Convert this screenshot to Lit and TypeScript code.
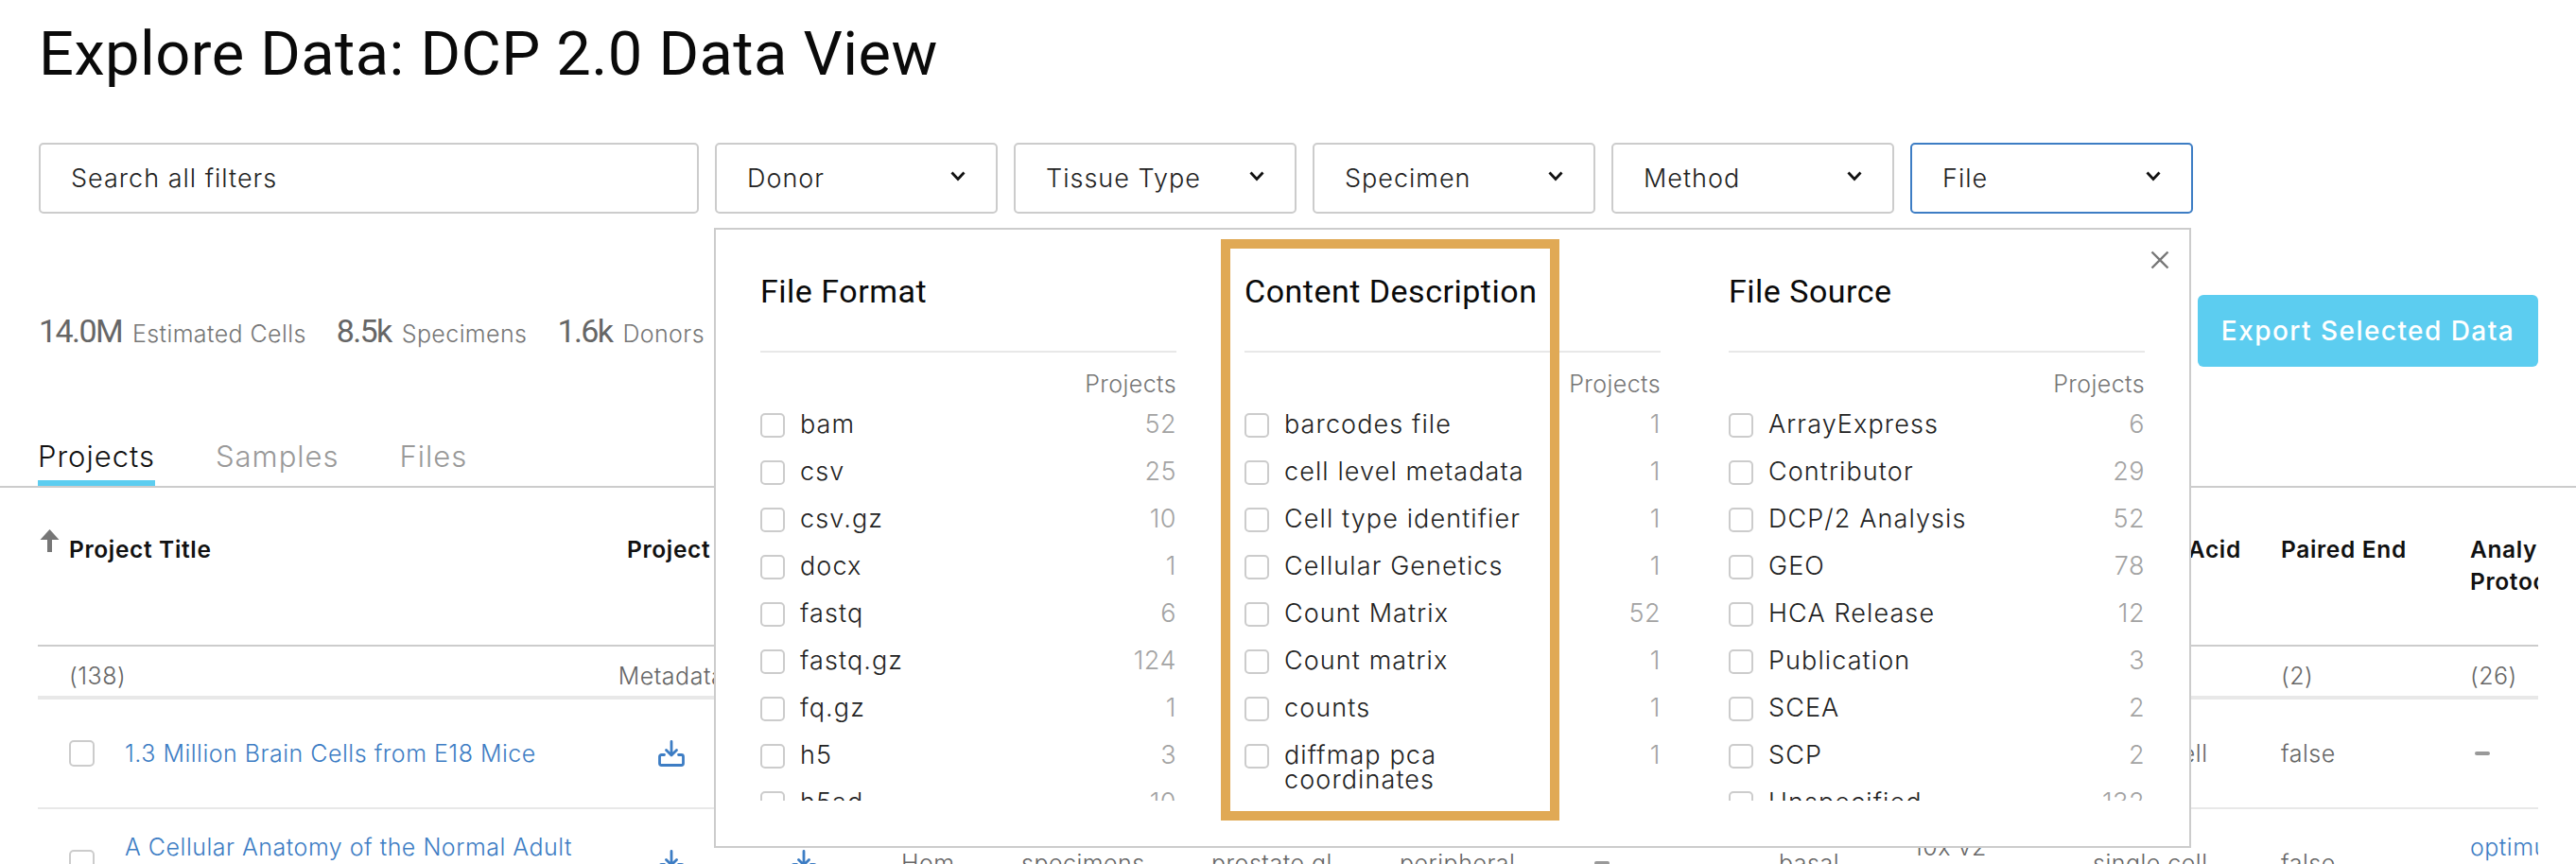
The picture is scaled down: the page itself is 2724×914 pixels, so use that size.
import { LitElement, html, css, svg } from 'lit';
import { customElement } from 'lit/decorators.js';

const SELECTS = ['Donor', 'Tissue Type', 'Specimen', 'Method', 'File'];

const STATS = [
  ['14.0M', 'Estimated Cells'],
  ['8.5k', 'Specimens'],
  ['1.6k', 'Donors'],
];

const FACETS: { title: string; terms: [string, number][] }[] = [
  {
    title: 'File Format',
    terms: [['bam', 52], ['csv', 25], ['csv.gz', 10], ['docx', 1], ['fastq', 6], ['fastq.gz', 124], ['fq.gz', 1], ['h5', 3], ['h5ad', 10]],
  },
  {
    title: 'Content Description',
    terms: [['barcodes file', 1], ['cell level metadata', 1], ['Cell type identifier', 1], ['Cellular Genetics', 1], ['Count Matrix', 52], ['Count matrix', 1], ['counts', 1], ['diffmap pca coordinates', 1]],
  },
  {
    title: 'File Source',
    terms: [['ArrayExpress', 6], ['Contributor', 29], ['DCP/2 Analysis', 52], ['GEO', 78], ['HCA Release', 12], ['Publication', 3], ['SCEA', 2], ['SCP', 2], ['Unspecified', 132]],
  },
];

const HEADERS = ['Project Title', 'Project Metadata', 'Project Matrices', 'Species', 'Sample Type', 'Anatomical Entity', 'Organ Part', 'Model Organ', 'Selected Cell Type', 'Library Construction Method', 'Nucleic Acid', 'Paired End', 'Analysis Protocol'];

const COUNTS = ['(138)', 'Metadata', '', '', '', '', '', '', '', '', '', '(2)', '(26)'];

const ROWS = [
  ['1.3 Million Brain Cells from E18 Mice', 'Mus', 'specimens', 'brain', 'cortex', '–', 'neuron', '10x v2', 'single cell', 'false', '–'],
  ['A Cellular Anatomy of the Normal Adult Prostate and Prostatic Urethra', 'Hom', 'specimens', 'prostate gl', 'peripheral', '–', 'basal', '10x v2 sequencing', 'single cell', 'false', 'optimus v4.2.2'],
];

const chevron = svg`<svg class="chevron" width="16" height="11" viewBox="0 0 16 11"><path d="M1.5 1.5 8 8.5l6.5-7" fill="none" stroke="#111" stroke-width="2.8"/></svg>`;

const downloadIcon = svg`<svg width="28" height="28" viewBox="0 0 28 28" fill="none" stroke="#3d7dc4" stroke-width="2.8" stroke-linecap="round" stroke-linejoin="round"><path d="M14 1.5v14M8.5 10.5l5.5 5.5 5.5-5.5"/><path d="M6.5 15.5H3.5a2 2 0 0 0-2 2v7a2 2 0 0 0 2 2h21a2 2 0 0 0 2-2v-7a2 2 0 0 0-2-2h-3"/></svg>`;

@customElement('app-root')
export class AppRoot extends LitElement {
  static styles = css`
    :host {
      display: block;
      position: relative;
      height: 914px;
      overflow: hidden;
      background: #fff;
      color: #111;
      font-family: 'Inter', 'Open Sans', sans-serif;
      font-weight: 300;
    }

    h1, h2 {
      margin: 0;
      font-family: 'Roboto', sans-serif;
      font-weight: 400;
    }

    h1 {
      height: 151px;
      padding: 25px 0 0 41px;
      box-sizing: border-box;
      font-size: 65px;
      line-height: 64px;
      letter-spacing: 0.45px;
      color: #0a0a0a;
    }

    .filters {
      position: relative;
      display: grid;
      grid-template-columns: 698px repeat(5, 299px);
      gap: 17px;
      height: 75px;
      padding-left: 41px;
    }

    .control {
      display: flex;
      align-items: center;
      justify-content: space-between;
      box-sizing: border-box;
      padding: 0 32px;
      border: 2px solid #ccc;
      border-radius: 5px;
      font-size: 27px;
      letter-spacing: 1px;
      color: #222;
    }

    .control.open {
      border-color: #3d7dc4;
    }

    .chevron {
      margin-top: -4px;
    }

    .summary {
      display: flex;
      align-items: center;
      justify-content: space-between;
      height: 214px;
      padding: 34px 40px 0 41px;
      box-sizing: border-box;
    }

    .stats {
      display: flex;
      gap: 32px;
      color: #767676;
      font-size: 25px;
      letter-spacing: 0.4px;
    }

    .stats b {
      margin-right: 11px;
      font-family: 'Roboto', sans-serif;
      font-weight: 400;
      font-size: 34px;
      letter-spacing: -1.6px;
      color: #666;
    }

    .export {
      width: 360px;
      height: 76px;
      border: 0;
      border-radius: 6px;
      background: #5ccdf0;
      color: #fff;
      font: 500 28px 'Inter', sans-serif;
      letter-spacing: 1.45px;
    }

    .tabs {
      display: flex;
      gap: 64px;
      height: 76px;
      padding-left: 40px;
      box-sizing: border-box;
      border-bottom: 2px solid #ccc;
      font-size: 31px;
      letter-spacing: 1px;
      color: #999;
    }

    .tab {
      height: 74px;
      padding-top: 25px;
      box-sizing: border-box;
      line-height: 36px;
      white-space: nowrap;
    }

    .tab.active {
      color: #111;
      border-bottom: 6px solid #5ccdf0;
    }

    .table {
      margin-left: 40px;
      width: 2644px;
      overflow: hidden;
      font-size: 25px;
      letter-spacing: 0.5px;
      color: #666;
      line-height: 34px;
    }

    .grid {
      display: grid;
      grid-template-columns: 600px 140px 173px 127px 201px 199px 201px 200px 142px 190px 199px 200px 140px;
      width: 2712px;
    }

    .grid > div {
      padding-right: 16px;
      box-sizing: border-box;
    }

    .grid > .mid {
      text-align: center;
      padding-right: 0;
    }

    .grid > .mid.third {
      padding-right: 33px;
    }

    .head {
      height: 168px;
      padding-top: 48px;
      box-sizing: border-box;
      border-bottom: 2px solid #ccc;
      font-size: 24.5px;
      letter-spacing: 0.65px;
      font-weight: 600;
      color: #111;
    }

    .grid > .first {
      padding-left: 33px;
    }

    .title-head {
      position: relative;
    }

    .sort {
      position: absolute;
      left: 2px;
      top: -4px;
    }

    .head .lead {
      padding-left: 23px;
      white-space: nowrap;
    }

    .counts {
      height: 56px;
      padding-top: 14px;
      box-sizing: border-box;
      border-bottom: 4px solid #e8e8e8;
    }

    .row {
      height: 114px;
      align-items: center;
      border-bottom: 2px solid #e8e8e8;
    }

    .row .first {
      display: flex;
      align-items: center;
      gap: 32px;
    }

    .box {
      flex: none;
      width: 26px;
      height: 26px;
      box-sizing: border-box;
      border: 2px solid #ccc;
      border-radius: 5px;
      background: #fff;
    }

    .row .box {
      width: 27px;
      height: 28px;
    }

    a {
      color: #3d7dc4;
    }

    .row .mid svg {
      display: block;
      margin: 0 auto;
    }

    .dash {
      display: block;
      width: 16px;
      height: 4px;
      margin-left: 5px;
      border-radius: 2px;
      background: #999;
    }

    /* file filter panel, sits over the summary and the table */
    .popup {
      position: absolute;
      left: 755px;
      top: 241px;
      width: 1562px;
      height: 656px;
      box-sizing: border-box;
      padding-left: 47px;
      display: grid;
      grid-template-columns: repeat(3, 440px);
      gap: 72px;
      border: 2px solid #ccc;
      background: #fff;
    }

    .facet h2 {
      padding: 45px 0 43px;
      border-bottom: 2px solid #e8e8e8;
      font-size: 34px;
      line-height: 40px;
      letter-spacing: 0.5px;
      color: #0a0a0a;
      white-space: nowrap;
    }

    .projects {
      margin: 18px 0 3px;
      text-align: right;
      font-size: 25px;
      letter-spacing: 0.4px;
      line-height: 30px;
      color: #767676;
    }

    .terms {
      height: 423px;
      overflow: hidden;
    }

    .term {
      display: flex;
      align-items: flex-start;
      box-sizing: border-box;
      min-height: 50px;
      padding-top: 13px;
      font-size: 27px;
      letter-spacing: 1.1px;
      line-height: 26px;
      color: #222;
    }

    .term .label {
      flex: 1;
      margin: -1px 0 0 16px;
      max-width: 290px;
    }

    .term .num {
      margin: -1px 0 0 auto;
      letter-spacing: 0.5px;
      color: #a3a3a3;
    }

    .close {
      position: absolute;
      right: 21px;
      top: 22px;
    }

    /* annotation drawn on top of the screenshot */
    .highlight {
      position: absolute;
      left: 1291px;
      top: 253px;
      width: 358px;
      height: 615px;
      box-sizing: border-box;
      border: 10px solid #e0a955;
    }
  `;

  private renderFacet(facet: { title: string; terms: [string, number][] }) {
    return html`
      <div class="facet">
        <h2>${facet.title}</h2>
        <div class="projects">Projects</div>
        <div class="terms">
          ${facet.terms.map(
            ([name, num]) => html`
              <div class="term">
                <span class="box"></span>
                <span class="label">${name}</span>
                <span class="num">${num}</span>
              </div>
            `
          )}
        </div>
      </div>
    `;
  }

  private renderRow(row: string[]) {
    const [title, ...rest] = row;
    return html`
      <div class="grid row">
        <div class="first"><span class="box"></span><a>${title}</a></div>
        <div class="mid">${downloadIcon}</div>
        <div class="mid third">${downloadIcon}</div>
        ${rest.map((cell, i) =>
          cell === '–'
            ? html`<div><span class="dash"></span></div>`
            : i === 9
              ? html`<div><a>${cell}</a></div>`
              : html`<div>${cell}</div>`
        )}
      </div>
    `;
  }

  render() {
    return html`
      <h1>Explore Data: DCP 2.0 Data View</h1>

      <div class="filters">
        <div class="control">Search all filters</div>
        ${SELECTS.map(
          s => html`<div class="control ${s === 'File' ? 'open' : ''}">${s}${chevron}</div>`
        )}
      </div>

      <div class="summary">
        <div class="stats">
          ${STATS.map(([n, label]) => html`<span><b>${n}</b>${label}</span>`)}
        </div>
        <button class="export">Export Selected Data</button>
      </div>

      <div class="tabs">
        <div class="tab active">Projects</div>
        <div class="tab">Samples</div>
        <div class="tab">Files</div>
      </div>

      <div class="table">
        <div class="grid head">
          ${HEADERS.map((h, i) =>
            i === 0
              ? html`<div class="first title-head">
                  <svg class="sort" width="21" height="24" viewBox="0 0 21 24"><path d="M10.5 0 20.5 11H13v13H8V11H.5z" fill="#777"/></svg>
                  ${h}
                </div>`
              : html`<div class="${i === 1 ? 'lead' : ''}">${h}</div>`
          )}
        </div>
        <div class="grid counts">
          ${COUNTS.map((c, i) =>
            html`<div class="${i === 0 ? 'first' : i === 1 ? 'mid' : i === 2 ? 'mid third' : ''}">${c}</div>`
          )}
        </div>
        ${ROWS.map(r => this.renderRow(r))}
      </div>

      <div class="popup">
        ${FACETS.map(f => this.renderFacet(f))}
        <svg class="close" width="20" height="20" viewBox="0 0 20 20"><path d="M1.5 1.5l17 17M18.5 1.5l-17 17" stroke="#777" stroke-width="2.4"/></svg>
      </div>
      <div class="highlight"></div>
    `;
  }
}

declare global {
  interface HTMLElementTagNameMap {
    'app-root': AppRoot;
  }
}
